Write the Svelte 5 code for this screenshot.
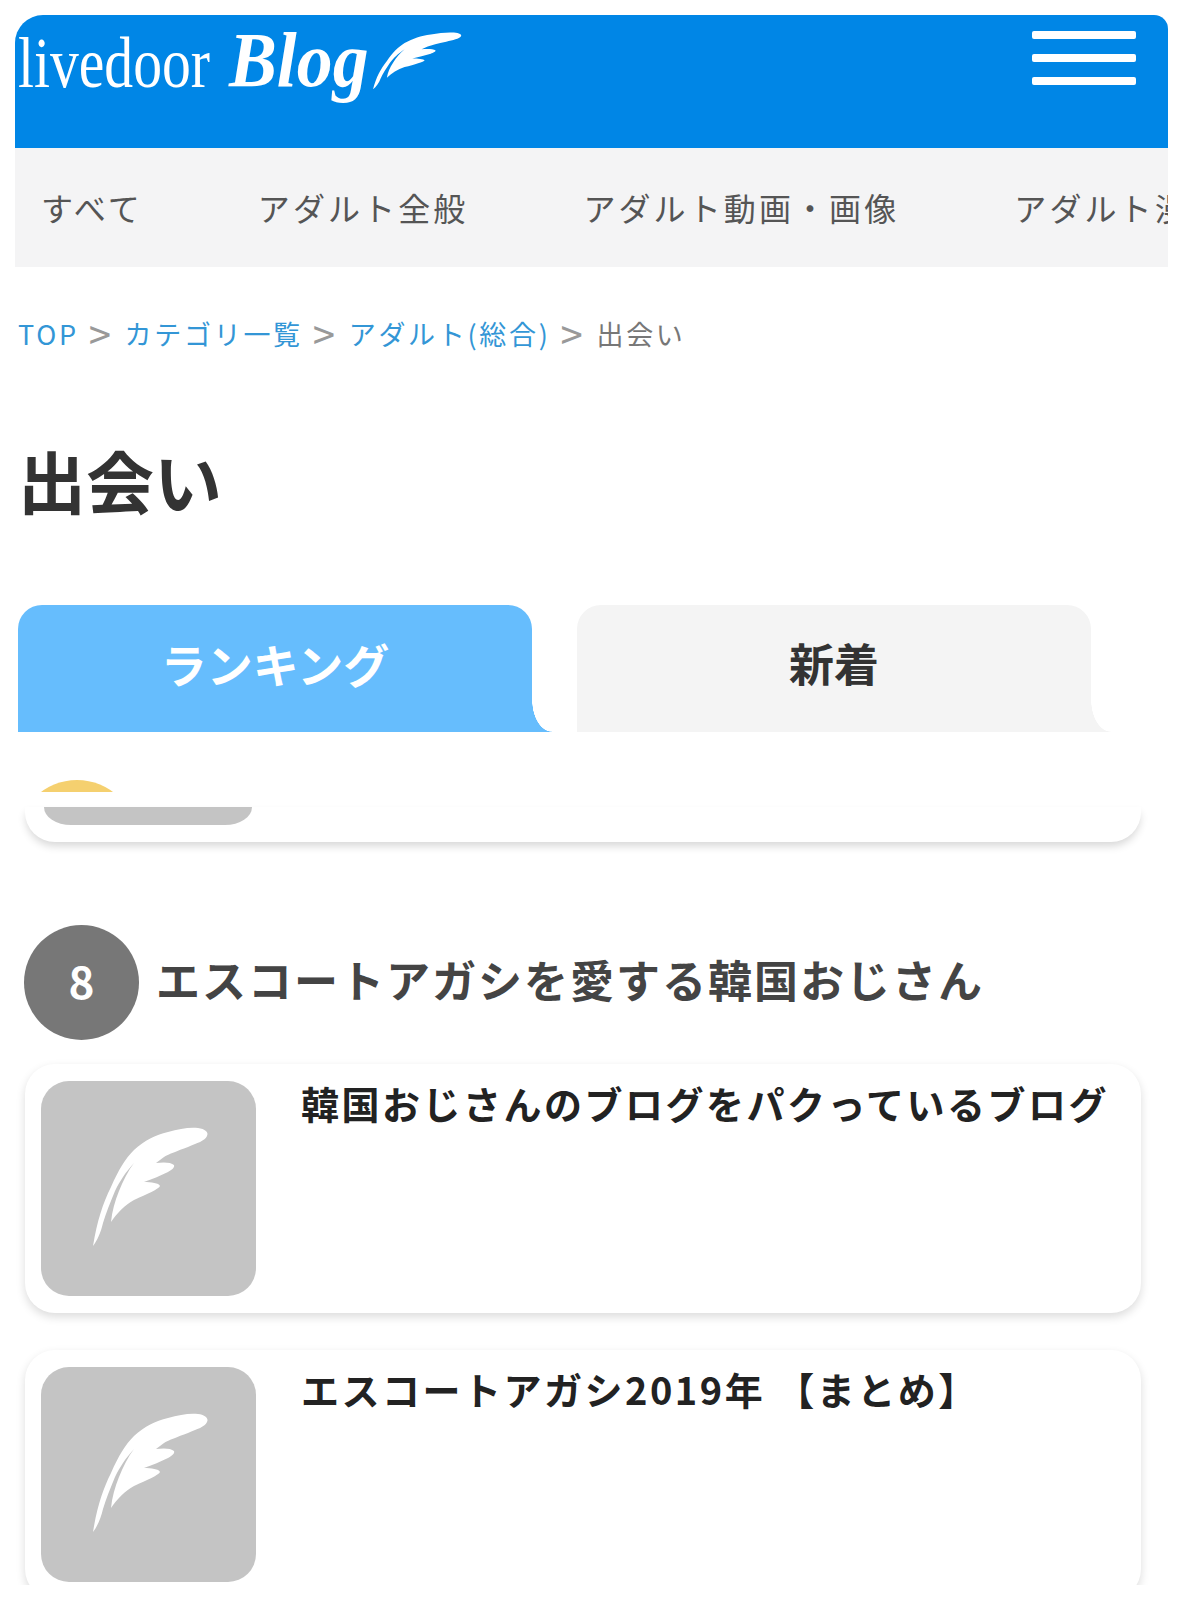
<script lang="ts">
  const navItems = ["すべて", "アダルト全般", "アダルト動画・画像", "アダルト漫画"];
  const feather =
    "M52 165C56 140 62 122 70 106C78 88 84 78 93 69C104 59 114 54 127 51C138 48 148 46 157 47C164 48 168 51 166 55C164 60 156 62 147 66C136 70 128 73 123 76L115 82C122 81 130 81 133 84C134 87 130 89 127 91C119 95 111 98 103 101C110 101 118 102 119 105C118 108 106 113 93 119C84 124 76 132 70 141C71 130 74 120 78 110C82 100 87 90 93 82C84 92 79 100 74 110C69 122 65 132 62 142C60 151 56 160 52 165Z";
  const entries = ["韓国おじさんのブログをパクっているブログ", "エスコートアガシ2019年 【まとめ】"];
</script>

<div class="page">
  <header class="header">
    <svg class="logo" width="470" height="118" viewBox="0 0 470 118">
      <text transform="translate(3 72) scale(0.8 1)" class="logo-live">livedoor</text>
      <text transform="translate(214 71) scale(0.92 1)" class="logo-blog">Blog</text>
      <path d={feather} fill="#fff" transform="translate(318 -5) scale(0.77 0.48)" />
    </svg>
    <div class="burger" aria-label="menu">
      <span></span><span></span><span></span>
    </div>
  </header>

  <nav class="nav">
    {#each navItems as item}
      <span class="nav-item">{item}</span>
    {/each}
  </nav>

  <div class="crumbs">
    <span class="link">TOP</span><span class="sep">&gt;</span>
    <span class="link">カテゴリ一覧</span><span class="sep">&gt;</span>
    <span class="link">アダルト(総合)</span><span class="sep">&gt;</span>
    <span class="here">出会い</span>
  </div>

  <h1 class="title">出会い</h1>

  <div class="tabs">
    <div class="tab active">ランキング</div>
    <div class="tab">新着</div>
  </div>

  <div class="peek-top"><div class="medal"></div></div>
  <div class="peek-card"><div class="peek-thumb"></div></div>

  <section class="rank-row">
    <div class="rank">8</div>
    <div class="rank-name">エスコートアガシを愛する韓国おじさん</div>
  </section>

  {#each entries as entry}
    <article class="card">
      <div class="thumb">
        <svg width="215" height="215" viewBox="0 0 215 215">
          <path d={feather} fill="#fff" />
        </svg>
      </div>
      <div class="card-title">{entry}</div>
    </article>
  {/each}
</div>

<style>
  :global(body) {
    margin: 0;
    background: #fff;
  }
  .page {
    height: 1585px;
    overflow: hidden;
    padding: 15px 32px 0 15px;
    box-sizing: border-box;
    font-family: "Noto Sans CJK JP", "Noto Sans", sans-serif;
    color: #333;
  }
  .header {
    display: flex;
    justify-content: space-between;
    height: 133px;
    background: #0086e6;
    border-radius: 28px 14px 0 0;
  }
  .logo {
    display: block;
  }
  .logo-live {
    font-family: "Liberation Serif", serif;
    font-size: 72px;
    fill: #fff;
  }
  .logo-blog {
    font-family: "Liberation Serif", serif;
    font-size: 78px;
    font-weight: 700;
    font-style: italic;
    fill: #fff;
  }
  .burger {
    display: flex;
    flex-direction: column;
    gap: 15px;
    width: 104px;
    margin: 16px 32px 0 0;
  }
  .burger span {
    height: 8px;
    background: #fff;
    border-radius: 2px;
  }
  .nav {
    display: flex;
    align-items: center;
    gap: 115px;
    height: 119px;
    padding: 0 0 2px 26px;
    box-sizing: border-box;
    background: #f4f4f5;
    overflow: hidden;
    white-space: nowrap;
  }
  .nav-item {
    flex: none;
    font-size: 32px;
    letter-spacing: 3.1px;
    color: #555;
  }
  .crumbs {
    display: flex;
    align-items: center;
    height: 40px;
    margin: 46px 0 0 3px;
    font-size: 27px;
    letter-spacing: 2.7px;
    white-space: nowrap;
  }
  .link {
    color: #3396d6;
  }
  .sep {
    margin: 0 11px 0 10px;
    font-size: 40px;
    font-weight: 400;
    line-height: 40px;
    color: #999;
  }
  .here {
    color: #777;
  }
  .title {
    margin: 82px 0 0 3px;
    font-size: 68px;
    line-height: 90px;
    font-weight: 700;
    color: #333;
  }
  .tabs {
    display: flex;
    gap: 45px;
    margin: 80px 0 0 3px;
  }
  .tab {
    position: relative;
    width: 514px;
    height: 127px;
    line-height: 116px;
    text-align: center;
    font-size: 45px;
    font-weight: 700;
    color: #333;
    background: #f4f4f4;
    border-radius: 24px 24px 0 0;
  }
  .tab::after {
    content: "";
    position: absolute;
    left: 100%;
    bottom: 0;
    width: 20px;
    height: 32px;
    background: radial-gradient(ellipse 20px 32px at 100% 0, transparent 98%, #f4f4f4 100%);
  }
  .tab.active {
    color: #fff;
    font-size: 46px;
    background: #66bdfd;
  }
  .tab.active::after {
    background: radial-gradient(ellipse 20px 32px at 100% 0, transparent 98%, #66bdfd 100%);
  }
  .peek-top {
    display: flex;
    align-items: flex-end;
    height: 60px;
    margin-bottom: 15px;
    padding-left: 26px;
  }
  .medal {
    width: 72px;
    height: 12px;
    background: #f5d06f;
    clip-path: circle(60px at 36px 60px);
  }
  .peek-card {
    height: 35px;
    margin: 0 27px 0 10px;
    padding-left: 19px;
    background: #fff;
    border-radius: 0 0 30px 30px;
    box-shadow: 0 5px 8px -1px rgba(0, 0, 0, 0.16);
  }
  .peek-thumb {
    width: 208px;
    height: 18px;
    background: #c4c4c4;
    border-radius: 0 0 27px 27px / 0 0 18px 18px;
  }
  .rank-row {
    display: flex;
    align-items: center;
    gap: 17px;
    margin: 83px 0 24px 9px;
  }
  .rank {
    flex: none;
    display: flex;
    align-items: center;
    justify-content: center;
    width: 115px;
    height: 115px;
    padding-bottom: 5px;
    box-sizing: border-box;
    border-radius: 50%;
    background: #777;
    color: #fff;
    font-size: 44px;
    font-weight: 700;
  }
  .rank-name {
    padding-bottom: 7px;
    font-size: 44px;
    letter-spacing: 2px;
    font-weight: 700;
    color: #444;
    white-space: nowrap;
  }
  .card {
    display: flex;
    gap: 45px;
    height: 249px;
    margin: 0 27px 37px 10px;
    padding: 17px 16px;
    box-sizing: border-box;
    background: #fff;
    border-radius: 30px;
    box-shadow: 0 4px 10px rgba(0, 0, 0, 0.14);
  }
  .thumb {
    flex: none;
    width: 215px;
    height: 215px;
    background: #c4c4c4;
    border-radius: 28px;
  }
  .thumb svg {
    display: block;
  }
  .card-title {
    font-size: 38px;
    line-height: 44px;
    letter-spacing: 2.5px;
    font-weight: 700;
    color: #222;
    white-space: nowrap;
  }
</style>
